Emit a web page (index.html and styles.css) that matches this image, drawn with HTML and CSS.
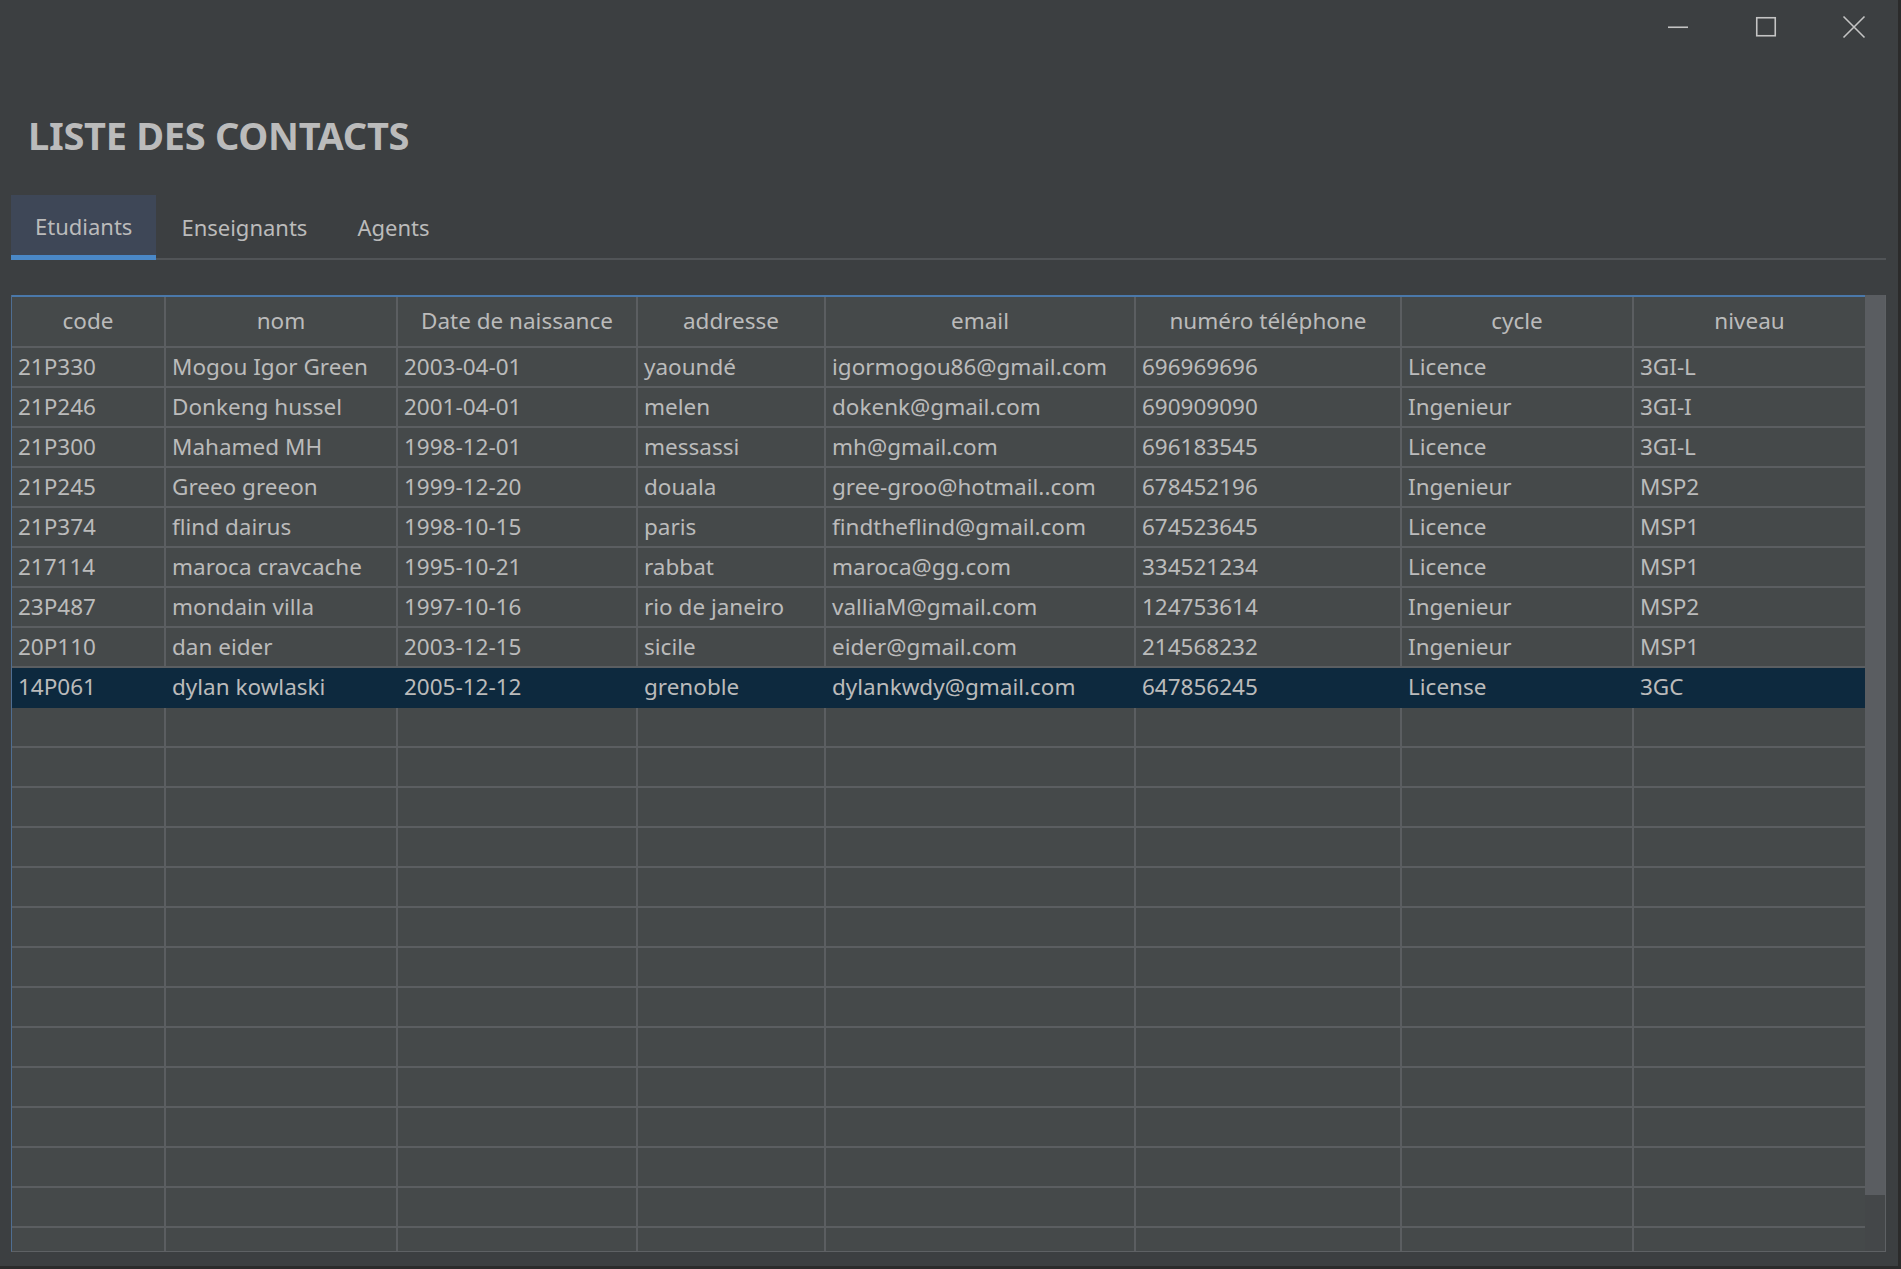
FILE: index.html
```html
<!DOCTYPE html>
<html lang="fr">
<head>
<meta charset="utf-8">
<title>Liste des contacts</title>
<link rel="stylesheet" href="styles.css">
</head>
<body>
<div class="window">
  <div class="titlebar">
    <div class="ctrl"><svg width="22" height="22" viewBox="0 0 22 22"><path d="M1 11.25h20" class="ico"/></svg></div>
    <div class="ctrl"><svg width="22" height="22" viewBox="0 0 22 22"><rect x="1.75" y="1.75" width="18.5" height="18" class="ico"/></svg></div>
    <div class="ctrl"><svg width="24" height="24" viewBox="0 0 24 24"><path d="M1.5 1.5L22.5 22.5M22.5 1.5L1.5 22.5" class="ico"/></svg></div>
  </div>
  <h1 class="title">LISTE DES CONTACTS</h1>
  <div class="tabs">
    <div class="tab active">Etudiants</div>
    <div class="tab">Enseignants</div>
    <div class="tab">Agents</div>
  </div>
  <div class="scrollpane">
    <div class="viewport">
      <div class="row head">
        <div class="cell">code</div><div class="cell">nom</div><div class="cell">Date de naissance</div><div class="cell">addresse</div><div class="cell">email</div><div class="cell">numéro téléphone</div><div class="cell">cycle</div><div class="cell">niveau</div>
      </div>
      <div class="row"><div class="cell">21P330</div><div class="cell">Mogou Igor Green</div><div class="cell">2003-04-01</div><div class="cell">yaoundé</div><div class="cell">igormogou86@gmail.com</div><div class="cell">696969696</div><div class="cell">Licence</div><div class="cell">3GI-L</div></div>
      <div class="row"><div class="cell">21P246</div><div class="cell">Donkeng hussel</div><div class="cell">2001-04-01</div><div class="cell">melen</div><div class="cell">dokenk@gmail.com</div><div class="cell">690909090</div><div class="cell">Ingenieur</div><div class="cell">3GI-I</div></div>
      <div class="row"><div class="cell">21P300</div><div class="cell">Mahamed MH</div><div class="cell">1998-12-01</div><div class="cell">messassi</div><div class="cell">mh@gmail.com</div><div class="cell">696183545</div><div class="cell">Licence</div><div class="cell">3GI-L</div></div>
      <div class="row"><div class="cell">21P245</div><div class="cell">Greeo greeon</div><div class="cell">1999-12-20</div><div class="cell">douala</div><div class="cell">gree-groo@hotmail..com</div><div class="cell">678452196</div><div class="cell">Ingenieur</div><div class="cell">MSP2</div></div>
      <div class="row"><div class="cell">21P374</div><div class="cell">flind dairus</div><div class="cell">1998-10-15</div><div class="cell">paris</div><div class="cell">findtheflind@gmail.com</div><div class="cell">674523645</div><div class="cell">Licence</div><div class="cell">MSP1</div></div>
      <div class="row"><div class="cell">217114</div><div class="cell">maroca cravcache</div><div class="cell">1995-10-21</div><div class="cell">rabbat</div><div class="cell">maroca@gg.com</div><div class="cell">334521234</div><div class="cell">Licence</div><div class="cell">MSP1</div></div>
      <div class="row"><div class="cell">23P487</div><div class="cell">mondain villa</div><div class="cell">1997-10-16</div><div class="cell">rio de janeiro</div><div class="cell">valliaM@gmail.com</div><div class="cell">124753614</div><div class="cell">Ingenieur</div><div class="cell">MSP2</div></div>
      <div class="row"><div class="cell">20P110</div><div class="cell">dan eider</div><div class="cell">2003-12-15</div><div class="cell">sicile</div><div class="cell">eider@gmail.com</div><div class="cell">214568232</div><div class="cell">Ingenieur</div><div class="cell">MSP1</div></div>
      <div class="row selected"><div class="cell">14P061</div><div class="cell">dylan kowlaski</div><div class="cell">2005-12-12</div><div class="cell">grenoble</div><div class="cell">dylankwdy@gmail.com</div><div class="cell">647856245</div><div class="cell">License</div><div class="cell">3GC</div></div>
      <div class="row"><div class="cell"></div><div class="cell"></div><div class="cell"></div><div class="cell"></div><div class="cell"></div><div class="cell"></div><div class="cell"></div><div class="cell"></div></div>
      <div class="row"><div class="cell"></div><div class="cell"></div><div class="cell"></div><div class="cell"></div><div class="cell"></div><div class="cell"></div><div class="cell"></div><div class="cell"></div></div>
      <div class="row"><div class="cell"></div><div class="cell"></div><div class="cell"></div><div class="cell"></div><div class="cell"></div><div class="cell"></div><div class="cell"></div><div class="cell"></div></div>
      <div class="row"><div class="cell"></div><div class="cell"></div><div class="cell"></div><div class="cell"></div><div class="cell"></div><div class="cell"></div><div class="cell"></div><div class="cell"></div></div>
      <div class="row"><div class="cell"></div><div class="cell"></div><div class="cell"></div><div class="cell"></div><div class="cell"></div><div class="cell"></div><div class="cell"></div><div class="cell"></div></div>
      <div class="row"><div class="cell"></div><div class="cell"></div><div class="cell"></div><div class="cell"></div><div class="cell"></div><div class="cell"></div><div class="cell"></div><div class="cell"></div></div>
      <div class="row"><div class="cell"></div><div class="cell"></div><div class="cell"></div><div class="cell"></div><div class="cell"></div><div class="cell"></div><div class="cell"></div><div class="cell"></div></div>
      <div class="row"><div class="cell"></div><div class="cell"></div><div class="cell"></div><div class="cell"></div><div class="cell"></div><div class="cell"></div><div class="cell"></div><div class="cell"></div></div>
      <div class="row"><div class="cell"></div><div class="cell"></div><div class="cell"></div><div class="cell"></div><div class="cell"></div><div class="cell"></div><div class="cell"></div><div class="cell"></div></div>
      <div class="row"><div class="cell"></div><div class="cell"></div><div class="cell"></div><div class="cell"></div><div class="cell"></div><div class="cell"></div><div class="cell"></div><div class="cell"></div></div>
      <div class="row"><div class="cell"></div><div class="cell"></div><div class="cell"></div><div class="cell"></div><div class="cell"></div><div class="cell"></div><div class="cell"></div><div class="cell"></div></div>
      <div class="row"><div class="cell"></div><div class="cell"></div><div class="cell"></div><div class="cell"></div><div class="cell"></div><div class="cell"></div><div class="cell"></div><div class="cell"></div></div>
      <div class="row"><div class="cell"></div><div class="cell"></div><div class="cell"></div><div class="cell"></div><div class="cell"></div><div class="cell"></div><div class="cell"></div><div class="cell"></div></div>
      <div class="row"><div class="cell"></div><div class="cell"></div><div class="cell"></div><div class="cell"></div><div class="cell"></div><div class="cell"></div><div class="cell"></div><div class="cell"></div></div>
    </div>
    <div class="scrollbar"><div class="thumb"></div></div>
  </div>
</div>
</body>
</html>
```

FILE: styles.css
```css
html, body {
  margin: 0;
  padding: 0;
}
body {
  background: #2b2b2b;
  width: 1901px;
  height: 1269px;
  overflow: hidden;
  font-family: "Noto Sans", "Open Sans", sans-serif;
  color: #bbbbbb;
}
.window {
  width: 1898px;
  height: 1266px;
  background: #3c3f41;
  display: flex;
  flex-direction: column;
}
.titlebar {
  height: 54px;
  display: flex;
  justify-content: flex-end;
  flex: none;
}
.ctrl {
  width: 88px;
  height: 54px;
  display: flex;
  align-items: center;
  justify-content: center;
}
.ico {
  fill: none;
  stroke: #c4c4c4;
  stroke-width: 1.6;
}
.title {
  margin: 55px 0 0 28px;
  font-size: 38px;
  line-height: 52px;
  font-weight: 700;
  color: #bbbbbb;
  letter-spacing: -0.3px;
  flex: none;
}
.tabs {
  margin: 34px 12px 0 11px;
  display: flex;
  align-items: flex-start;
  border-bottom: 2px solid #515457;
  height: 63px;
  flex: none;
}
.tab {
  box-sizing: border-box;
  height: 63px;
  padding: 0 24px 0;
  display: flex;
  align-items: center;
  font-size: 22px;
  color: #bbbbbb;
}
.tab + .tab {
  padding: 0 25px 0;
}
.tab.active {
  height: 65px;
  padding-top: 2px;
  background: #3e4757;
  border-bottom: 5px solid #4a88c7;
}
.scrollpane {
  margin: 35px 0 0 11px;
  width: 1875px;
  height: 957px;
  box-sizing: border-box;
  border-left: 1px solid #4f6e92;
  border-right: 1px solid #5e6164;
  border-bottom: 1px solid #5e6164;
  display: flex;
  flex: none;
}
.viewport {
  width: 1853px;
  height: 956px;
  box-sizing: border-box;
  border-top: 2px solid #4a78aa;
  overflow: hidden;
  background: #45494a;
  flex: none;
}
.scrollbar {
  width: 20px;
  height: 956px;
  background: #444749;
  flex: none;
}
.thumb {
  height: 900px;
  background: #5a5d61;
}
.row {
  display: grid;
  grid-template-columns: 154px 232px 240px 188px 310px 266px 232px 231px;
  height: 40px;
}
.row.head {
  height: 51px;
}
.cell {
  box-sizing: border-box;
  border-right: 2px solid #5b5e61;
  border-bottom: 2px solid #5b5e61;
  padding: 0 6px;
  font-size: 22.5px;
  line-height: 38px;
  white-space: nowrap;
  overflow: hidden;
  color: #bbbbbb;
}
.cell:last-child {
  border-right: none;
}
.head .cell {
  text-align: center;
  line-height: 48px;
}
.selected .cell {
  background: #0d293e;
  border-color: #0d293e;
}
```
